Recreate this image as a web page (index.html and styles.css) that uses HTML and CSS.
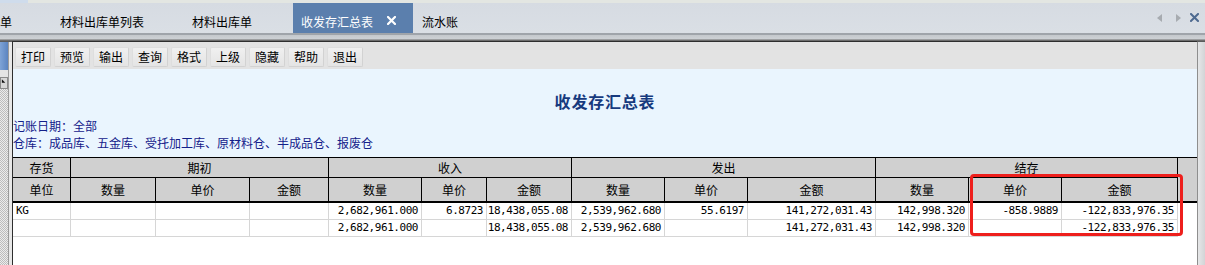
FILE: index.html
```html
<!DOCTYPE html>
<html lang="zh-CN">
<head>
<meta charset="utf-8">
<title>收发存汇总表</title>
<link rel="stylesheet" href="styles.css">
</head>
<body>
<div class="topstrip"><span class="topstrip-hl"></span></div>
<div class="tabbar">
  <div class="tab tab-cut">单</div>
  <div class="tab tab-plain">材料出库单列表</div>
  <div class="tab tab-plain tab-last">材料出库单</div>
  <div class="tab tab-active">收发存汇总表<span class="tab-close"><svg width="9" height="9" viewBox="0 0 9 9"><path d="M1 1 L8 8 M8 1 L1 8" stroke="#ffffff" stroke-width="2.2" stroke-linecap="square"/></svg></span></div>
  <div class="tab tab-after">流水账</div>
  <div class="tabnav">
    <svg class="nav-arrow" width="5" height="8" viewBox="0 0 5 8"><path d="M5 0 L0 4 L5 8 Z" fill="#a7abb0"/></svg>
    <svg class="nav-arrow nav-right" width="5" height="8" viewBox="0 0 5 8"><path d="M0 0 L5 4 L0 8 Z" fill="#a7abb0"/></svg>
    <svg class="nav-close" width="9" height="9" viewBox="0 0 9 9"><path d="M1 1 L8 8 M8 1 L1 8" stroke="#4e6a90" stroke-width="2" stroke-linecap="square"/></svg>
  </div>
</div>
<div class="tabsep"></div>
<div class="workspace">
  <div class="side">
    <div class="side-col">
      <div class="side-blue"></div>
      <div class="side-gap"></div>
      <div class="side-btn"><svg width="7" height="6" viewBox="0 0 7 6"><path d="M1 1 L1 5 L5 5 Z" fill="#111"/></svg></div>
      <div class="side-hatch"></div>
    </div>
    <div class="side-rail"></div>
  </div>
  <div class="frame">
    <div class="toolbar">
      <span class="tbtn">打印</span>
      <span class="tbtn">预览</span>
      <span class="tbtn">输出</span>
      <span class="tbtn">查询</span>
      <span class="tbtn">格式</span>
      <span class="tbtn">上级</span>
      <span class="tbtn">隐藏</span>
      <span class="tbtn">帮助</span>
      <span class="tbtn">退出</span>
    </div>
    <div class="report-head">
      <div class="report-title">收发存汇总表</div>
      <div class="report-info">记账日期：全部</div>
      <div class="report-info">仓库：成品库、五金库、受托加工库、原材料仓、半成品仓、报废仓</div>
    </div>
    <div class="grid-wrap">
      <div class="ghead">
        <div class="hc r1">存货</div>
        <div class="hc r1 span3">期初</div>
        <div class="hc r1 span3">收入</div>
        <div class="hc r1 span3">发出</div>
        <div class="hc r1 span3">结存</div>
        <div class="hc filler"></div>
        <div class="hc">单位</div>
        <div class="hc">数量</div>
        <div class="hc">单价</div>
        <div class="hc">金额</div>
        <div class="hc">数量</div>
        <div class="hc">单价</div>
        <div class="hc">金额</div>
        <div class="hc">数量</div>
        <div class="hc">单价</div>
        <div class="hc">金额</div>
        <div class="hc">数量</div>
        <div class="hc">单价</div>
        <div class="hc">金额</div>
      </div>
      <div class="grow">
        <div class="dc left">KG</div>
        <div class="dc"></div>
        <div class="dc"></div>
        <div class="dc"></div>
        <div class="dc">2,682,961.000</div>
        <div class="dc">6.8723</div>
        <div class="dc">18,438,055.08</div>
        <div class="dc">2,539,962.680</div>
        <div class="dc">55.6197</div>
        <div class="dc">141,272,031.43</div>
        <div class="dc">142,998.320</div>
        <div class="dc">-858.9889</div>
        <div class="dc">-122,833,976.35</div>
      </div>
      <div class="grow">
        <div class="dc left"></div>
        <div class="dc"></div>
        <div class="dc"></div>
        <div class="dc"></div>
        <div class="dc">2,682,961.000</div>
        <div class="dc"></div>
        <div class="dc">18,438,055.08</div>
        <div class="dc">2,539,962.680</div>
        <div class="dc"></div>
        <div class="dc">141,272,031.43</div>
        <div class="dc">142,998.320</div>
        <div class="dc"></div>
        <div class="dc">-122,833,976.35</div>
      </div>
      <div class="highlight"></div>
    </div>
  </div>
  <div class="rightgutter"></div>
</div>
</body>
</html>
```

FILE: styles.css
```css
* { box-sizing: border-box; }
html, body {
  margin: 0;
  padding: 0;
}
body {
  width: 1205px;
  height: 265px;
  overflow: hidden;
  background: #d9dde3;
  font-family: "Noto Sans CJK SC", "Noto Sans", sans-serif;
  font-size: 12px;
  color: #000;
}

/* top strip */
.topstrip {
  height: 3px;
  background: #e3e6e2;
  display: flex;
}
.topstrip-hl {
  width: 28px;
  background: #cfdcec;
}

/* tab bar */
.tabbar {
  height: 30px;
  display: flex;
  align-items: stretch;
  background: linear-gradient(#d6dbe2, #dadfe5);
}
.tab {
  display: flex;
  align-items: center;
  padding-top: 7px;
  line-height: 14px;
  white-space: nowrap;
}
.tab-cut { padding-right: 24px; }
.tab-plain { padding-left: 24px; padding-right: 24px; }
.tab-last { padding-right: 41px; }
.tab-active {
  background: #5b7fad;
  color: #ffffff;
  padding-left: 8px;
  padding-right: 17px;
  width: 120px;
}
.tab-close {
  display: flex;
  margin-left: 14px;
  margin-top: -2px;
}
.tab-after { padding-left: 9px; }
.tabnav {
  margin-left: auto;
  display: flex;
  align-items: center;
  padding-right: 6px;
  padding-bottom: 1px;
}
.nav-right { margin-left: 14px; }
.nav-close { margin-left: 9px; }

/* separator under tabs */
.tabsep {
  height: 8px;
  background: linear-gradient(#9fa4aa 0, #9fa4aa 2px, #c4c8cc 2px, #cdd1d5 6px, #6c6c6c 7px, #6c6c6c 8px);
}

/* workspace */
.workspace {
  display: flex;
  height: 224px;
}
.side {
  width: 12px;
  display: flex;
  border-top: 1px solid #5a5a5a;
}
.side-col {
  width: 9px;
  display: flex;
  flex-direction: column;
  border-right: 1px solid #9a9a9a;
}
.side-blue {
  height: 28px;
  background: linear-gradient(90deg, #7ea3d6, #5b84c0);
}
.side-gap {
  height: 7px;
  background: #e4e4e4;
}
.side-btn {
  height: 12px;
  background: #d8d8d8;
  border: 1px solid #8a8a8a;
  display: flex;
  align-items: flex-start;
}
.side-hatch {
  flex: 1;
  background-color: #ececec;
  background-image: repeating-conic-gradient(#bdbdbd 0 25%, #ececec 0 50%);
  background-size: 2px 2px;
}
.side-rail {
  flex: 1;
  background: #e8e8e8;
}

.frame {
  width: 1186px;
  border-top: 1px solid #2e2e2e;
  border-left: 1px solid #2e2e2e;
  border-right: 1px solid #8e8e8e;
  background: #ffffff;
  display: flex;
  flex-direction: column;
}
.rightgutter {
  flex: 1;
  background: linear-gradient(90deg, #e6e7e8, #d2d4d6);
  border-top: 1px solid #5a5a5a;
}

/* toolbar */
.toolbar {
  height: 27px;
  background: #e3e3e3;
  display: flex;
  align-items: flex-start;
  gap: 3px;
  padding: 5px 0 0 2px;
}
.tbtn {
  width: 36px;
  height: 20px;
  display: flex;
  align-items: center;
  justify-content: center;
  background: linear-gradient(#f0f0f0, #e4e4e4);
  border: 1px solid #dedede;
  border-right-color: #d2d2d2;
  border-bottom-color: #d2d2d2;
  border-radius: 2px;
  line-height: 14px;
}

/* report header */
.report-head {
  height: 88px;
  background: #eaf5fe;
  padding-top: 23px;
}
.report-title {
  height: 18px;
  line-height: 18px;
  text-align: center;
  font-size: 16px;
  font-weight: bold;
  color: #173a7e;
  margin-bottom: 7px;
  letter-spacing: 0.8px;
}
.report-info {
  height: 17px;
  line-height: 17px;
  color: #13208a;
  white-space: nowrap;
}

/* grid */
.grid-wrap {
  position: relative;
  flex: 1;
  background: #ffffff;
}
.ghead {
  display: grid;
  grid-template-columns: 58px 85px 94px 79px 93px 65px 85px 93px 83px 128px 93px 93px 116px 19px;
  grid-template-rows: 20px 23px;
  background: #d0d0d0;
  border-top: 1px solid #000;
  border-bottom: 2px solid #000;
}
.hc {
  border-right: 1px solid #000;
  display: flex;
  align-items: center;
  justify-content: center;
  line-height: 14px;
}
.hc.r1 { border-bottom: 1px solid #000; }
.hc.span3 { grid-column: span 3; }
.hc.filler {
  grid-column: 14;
  grid-row: 1 / span 2;
  border-right: none;
}
.grow {
  display: grid;
  grid-template-columns: 58px 85px 94px 79px 93px 65px 85px 93px 83px 128px 93px 93px 116px;
  height: 17px;
}
.dc {
  border-right: 1px solid #d6d6d6;
  border-bottom: 1px solid #d6d6d6;
  text-align: right;
  padding-right: 3px;
  font-family: "DejaVu Sans Mono", "Liberation Mono", monospace;
  font-size: 11px;
  letter-spacing: -0.45px;
  line-height: 16px;
  white-space: nowrap;
}
.dc.left {
  text-align: left;
  padding-left: 3px;
}
.highlight {
  position: absolute;
  left: 957px;
  top: 17px;
  width: 213px;
  height: 62px;
  border: 3px solid #ee1f1c;
  border-radius: 4px;
}
```
